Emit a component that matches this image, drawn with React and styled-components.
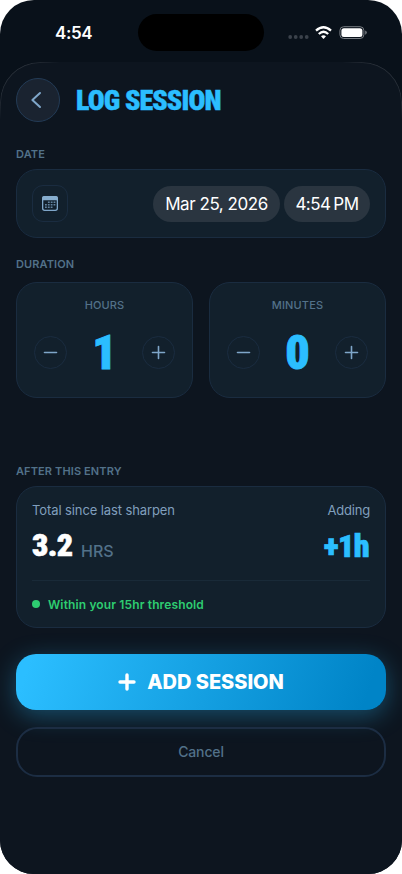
import React from "react";
import styled, { createGlobalStyle } from "styled-components";

const Global = createGlobalStyle`
  *, *::before, *::after { box-sizing: border-box; }
  body { margin: 0; background: #fff; font-family: Inter, "Liberation Sans", sans-serif; }
  button { font: inherit; color: inherit; padding: 0; margin: 0; cursor: pointer; }
  svg { display: block; flex: none; }
`;

const Screen = styled.main`
  width: 402px;
  height: 874px;
  overflow: hidden;
  border-radius: 34px;
  background: #09111a;
  color: #fff;
`;

const StatusBar = styled.header`
  display: grid;
  grid-template-columns: 138px 126px 138px;
  height: 62px;
  padding-top: 14px;
`;

const Clock = styled.time`
  padding: 9px 0 0 55px;
  font-size: 17px;
  line-height: 20px;
  font-weight: 600;
  letter-spacing: -0.4px;
`;

const Island = styled.div`
  height: 37px;
  border-radius: 19px;
  background: #000;
`;

const Indicators = styled.div`
  display: flex;
  align-items: flex-start;
  padding: 12px 0 0 24px;
`;

const Sheet = styled.section`
  position: relative;
  height: 812px;
  padding: 16px 16px 0;
  border-radius: 40px 40px 0 0;
  background: #0d151f;

  &::before {
    content: "";
    position: absolute;
    inset: 0 0 auto;
    height: 60px;
    border: 1px solid rgba(255, 255, 255, 0.11);
    border-bottom: 0;
    border-radius: 40px 40px 0 0;
    pointer-events: none;
    mask-image:
      linear-gradient(to right, #000 32px, transparent 60px, transparent calc(100% - 60px), #000 calc(100% - 32px)),
      linear-gradient(to bottom, #000 32px, transparent 58px);
    mask-composite: intersect;
  }
`;

const TitleRow = styled.div`
  display: flex;
  align-items: center;
  gap: 16px;
  height: 44px;
`;

const BackButton = styled.button`
  display: grid;
  place-items: center;
  width: 44px;
  height: 44px;
  padding-right: 4px;
  border: 1px solid #233b56;
  border-radius: 50%;
  background: #1a2330;
`;

const Condensed = styled.span`
  display: inline-block;
  white-space: nowrap;
  font-family: Roboto, "Liberation Sans", sans-serif;
  font-weight: 900;
  font-stretch: 75%;
  font-size: ${(p) => p.$size}px;
  line-height: 1;
  letter-spacing: ${(p) => p.$spacing || 0}px;
  color: ${(p) => p.$color || "#2bbeff"};
  -webkit-text-stroke: ${(p) => p.$stroke || 0.5}px currentColor;
`;

const Title = styled.h1`
  display: flex;
  margin: 2px 0 0;
  line-height: 1;
`;

const Label = styled.h2`
  margin: ${(p) => p.$top}px 0 0;
  height: 14px;
  font-size: 11px;
  line-height: 14px;
  font-weight: 600;
  letter-spacing: 0.12px;
  color: #527189;
`;

const Card = styled.div`
  border: 1px solid #1a2c40;
  border-radius: 21px;
  background: #12202c;
`;

const DateCard = styled(Card)`
  display: flex;
  align-items: center;
  gap: 4px;
  height: 69px;
  margin-top: 8px;
  padding: 0 15px;
`;

const IconTile = styled.div`
  display: grid;
  place-items: center;
  width: 36px;
  height: 37px;
  margin-right: auto;
  border: 1px solid #1a2c40;
  border-radius: 11px;
`;

const Pill = styled.button`
  width: ${(p) => p.$width}px;
  height: 36px;
  border: 0;
  border-radius: 18px;
  background: #2a3540;
  color: #fff;
  font-size: 17px;
  line-height: 36px;
  letter-spacing: ${(p) => p.$spacing}px;
  word-spacing: ${(p) => p.$word || 0}px;
  white-space: nowrap;
`;

const Steppers = styled.div`
  display: grid;
  grid-template-columns: 1fr 1fr;
  gap: 16px;
  margin-top: 11px;
`;

const StepperCard = styled(Card)`
  height: 116px;
  padding: 15px 17px 0;
`;

const StepperLabel = styled.div`
  height: 14px;
  text-align: center;
  font-size: 11px;
  line-height: 14px;
  font-weight: 500;
  letter-spacing: 0.15px;
  color: #527189;
`;

const StepperRow = styled.div`
  display: flex;
  align-items: center;
  justify-content: space-between;
  height: 50px;
  margin-top: 15.5px;
`;

const RoundButton = styled.button`
  display: grid;
  place-items: center;
  width: 33px;
  height: 33px;
  border: 1px solid #1a2c40;
  border-radius: 50%;
  background: transparent;
`;

const SummaryCard = styled(Card)`
  height: 142px;
  margin-top: 8px;
  padding: 15px 15px 0;
`;

const Spread = styled.div`
  display: flex;
  justify-content: space-between;
  height: ${(p) => p.$height}px;
`;

const Caption = styled.span`
  font-size: 13px;
  line-height: 16px;
  letter-spacing: ${(p) => p.$spacing}px;
  color: #809fbd;
`;

const Total = styled.div`
  display: flex;
  align-items: flex-start;
`;

const Unit = styled.span`
  margin-top: 12px;
  font-size: 16px;
  line-height: 20px;
  font-weight: 500;
  color: #527189;
`;

const Slot = styled.div`
  width: ${(p) => p.$width}px;
`;

const Added = styled.div`
  padding: 1px 1px 0 0;
`;

const Status = styled.div`
  display: flex;
  align-items: center;
  gap: 8px;
  height: 47px;
  border-top: 1px solid #192a38;
  color: #2ecc71;
  font-size: 12px;
  font-weight: 600;
  letter-spacing: 0.13px;
`;

const Dot = styled.i`
  width: 8px;
  height: 8px;
  border-radius: 50%;
  background: #2ecc71;
`;

const PrimaryButton = styled.button`
  display: flex;
  align-items: center;
  justify-content: center;
  gap: 11px;
  width: 100%;
  height: 56px;
  margin-top: 25.5px;
  border: 0;
  border-radius: 20px;
  background: linear-gradient(108deg, #2bbeff 4%, #0084c7 94%);
  box-shadow: 0 6px 24px rgba(43, 190, 255, 0.34);
  color: #fff;
  font-size: 20px;
  font-weight: 850;
  letter-spacing: -0.03px;
`;

const CancelButton = styled.button`
  width: 100%;
  height: 50px;
  margin-top: 17px;
  border: 2px solid #1c2d43;
  border-radius: 21px;
  background: transparent;
  color: #527189;
  font-size: 14px;
  font-weight: 500;
  letter-spacing: -0.15px;
`;

const Minus = () => (
  <svg width="15" height="15" viewBox="0 0 15 15" stroke="#7fa6c9" strokeWidth="1.6" strokeLinecap="round">
    <path d="M1.5 7.5H13.5" />
  </svg>
);

const Plus = () => (
  <svg width="15" height="15" viewBox="0 0 15 15" stroke="#7fa6c9" strokeWidth="1.6" strokeLinecap="round">
    <path d="M1.5 7.5H13.5M7.5 1.5V13.5" />
  </svg>
);

const Calendar = () => (
  <svg width="16" height="15" viewBox="0 0 16 15">
    <rect x="0.65" y="0.65" width="14.7" height="13.7" rx="2" fill="none" stroke="#7fa6c9" strokeWidth="1.3" />
    <path d="M0 4.3V2.4Q0 0 2.4 0H13.6Q16 0 16 2.4V4.3Z" fill="#86adce" />
    <path d="M5.9 6.3H13.6M3 8.8H13.6M3 11.3H10.6" stroke="#7fa6c9" strokeWidth="1.4" strokeDasharray="1.8 1.05" opacity="0.75" />
  </svg>
);

function Stepper({ label, value }) {
  return (
    <StepperCard>
      <StepperLabel>{label}</StepperLabel>
      <StepperRow>
        <RoundButton aria-label={`Decrease ${label}`}><Minus /></RoundButton>
        <Condensed $size={48} $stroke={0.9}>{value}</Condensed>
        <RoundButton aria-label={`Increase ${label}`}><Plus /></RoundButton>
      </StepperRow>
    </StepperCard>
  );
}

export default function App() {
  return (
    <>
      <Global />
      <Screen>
        <StatusBar>
          <Clock>4:54</Clock>
          <Island />
          <Indicators>
            <svg width="80" height="14" viewBox="0 0 80 14">
              <g fill="#3b424b">
                <circle cx="2.2" cy="11" r="1.9" />
                <circle cx="7.7" cy="11" r="1.9" />
                <circle cx="13.2" cy="11" r="1.9" />
                <circle cx="18.7" cy="11" r="1.9" />
              </g>
              <g fill="none" stroke="#fff" strokeWidth="2.3">
                <path d="M28 4.7Q35.5 -2.1 43 4.7" />
                <path d="M30.8 8Q35.5 3.6 40.2 8" />
              </g>
              <path d="M33 10.3Q35.5 8.2 38 10.3L35.5 12.9Z" fill="#fff" />
              <rect x="51.9" y="0.7" width="24" height="11.8" rx="3.8" fill="none" stroke="#777c82" />
              <rect x="53.4" y="2.2" width="21" height="8.8" rx="2.5" fill="#fff" />
              <path d="M77.2 4.5Q78.8 5.2 78.8 6.6Q78.8 8 77.2 8.7Z" fill="#777c82" />
            </svg>
          </Indicators>
        </StatusBar>
        <Sheet>
          <TitleRow>
            <BackButton aria-label="Back">
              <svg width="12" height="18" viewBox="0 0 12 18" fill="none" stroke="#7fa6c9" strokeWidth="2" strokeLinecap="round" strokeLinejoin="round">
                <path d="M10 2L2.4 9L10 16" />
              </svg>
            </BackButton>
            <Title><Condensed $size={28} $spacing={-0.87} $stroke={0.45}>LOG SESSION</Condensed></Title>
          </TitleRow>

          <Label $top={25}>DATE</Label>
          <DateCard>
            <IconTile><Calendar /></IconTile>
            <Pill $width={127} $spacing={-0.45}>Mar 25, 2026</Pill>
            <Pill $width={86} $spacing={-0.5} $word={-1.5}>4:54 PM</Pill>
          </DateCard>

          <Label $top={19}>DURATION</Label>
          <Steppers>
            <Stepper label="HOURS" value="1" />
            <Stepper label="MINUTES" value="0" />
          </Steppers>

          <Label $top={66}>AFTER THIS ENTRY</Label>
          <SummaryCard>
            <Spread $height={27}>
              <Caption $spacing={-0.1}>Total since last sharpen</Caption>
              <Caption $spacing={-0.2}>Adding</Caption>
            </Spread>
            <Spread $height={51}>
              <Total>
                <Slot $width={49}><Condensed $size={32} $spacing={-0.6} $stroke={0.6} $color="#fff">3.2</Condensed></Slot>
                <Unit>HRS</Unit>
              </Total>
              <Added><Condensed $size={32} $spacing={-0.6} $stroke={0.7}>+1h</Condensed></Added>
            </Spread>
            <Status><Dot />Within your 15hr threshold</Status>
          </SummaryCard>

          <PrimaryButton>
            <svg width="18" height="18" viewBox="0 0 18 18" stroke="#fff" strokeWidth="3.4" strokeLinecap="round">
              <path d="M2 9H16M9 2V16" />
            </svg>
            ADD SESSION
          </PrimaryButton>
          <CancelButton>Cancel</CancelButton>
        </Sheet>
      </Screen>
    </>
  );
}
